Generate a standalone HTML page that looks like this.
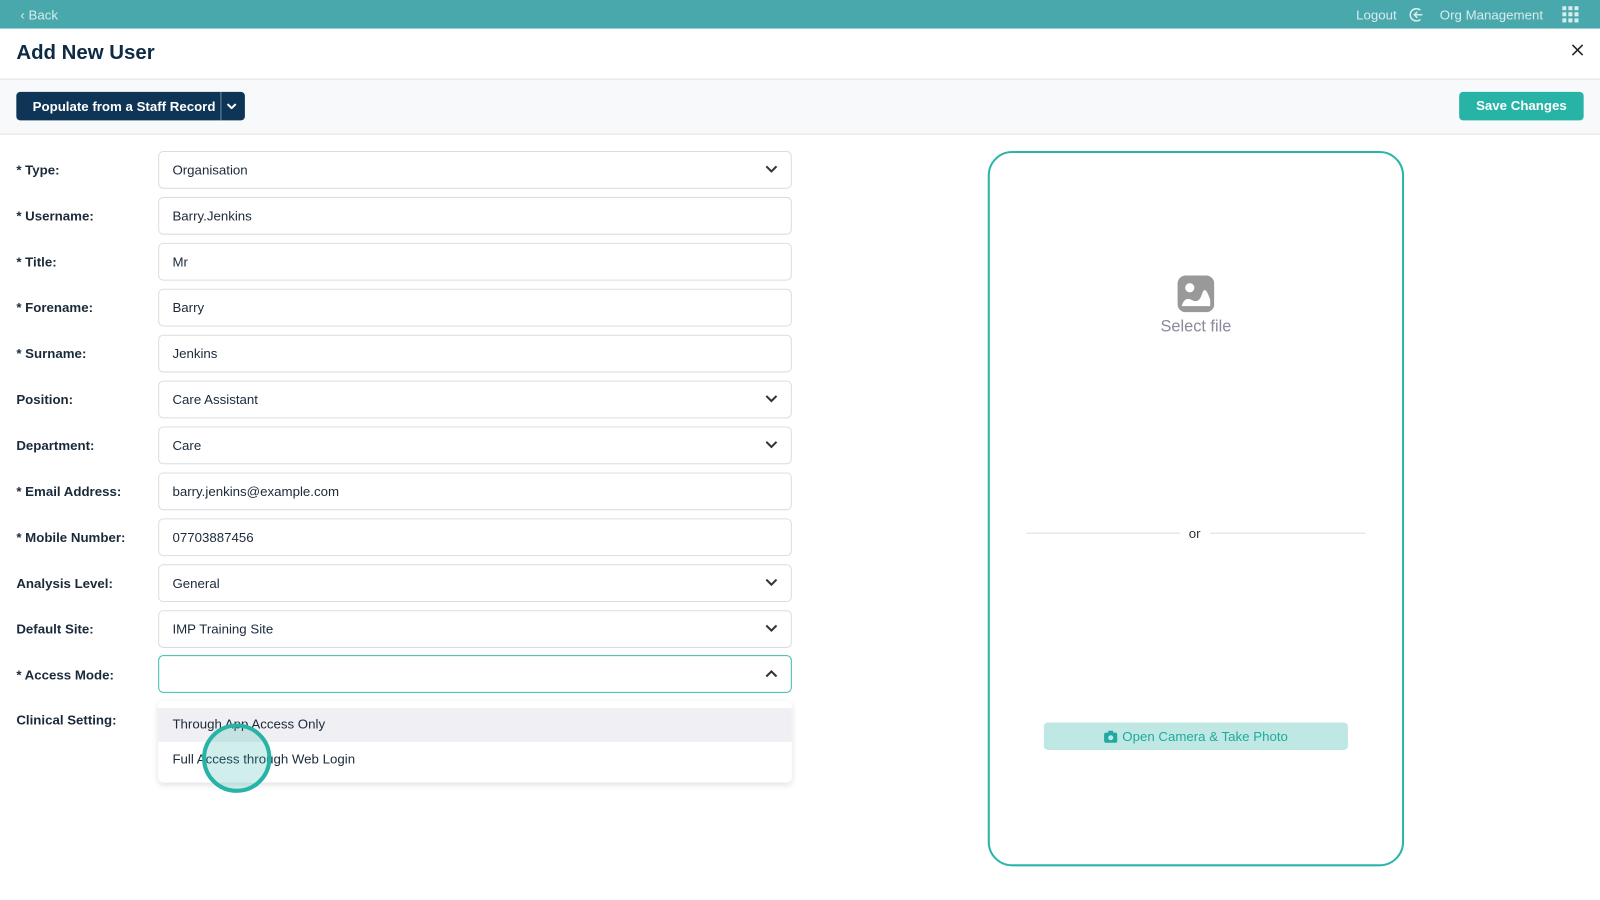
<!DOCTYPE html>
<html><head><style>
*{box-sizing:border-box;margin:0;padding:0}
body{width:1600px;height:900px;background:#fff;font-family:"Liberation Sans",sans-serif;color:#1b2a3a;position:relative;overflow:hidden}
#w{position:absolute;left:0;top:0;width:1568px;height:882px;transform:scale(1.0204);transform-origin:0 0}
.top{position:absolute;left:0;top:0;width:1568px;height:28px;background:#48a8ac;color:#d8eced;font-size:13px}
.top span{position:absolute;top:7px}
.title{position:absolute;left:16px;top:41px;font-size:20px;font-weight:bold;color:#0f2a44}
.hdr{position:absolute;left:0;top:77px;width:1568px;height:55px;background:#f8f9fa;border-top:1px solid #dde0e6;border-bottom:1px solid #e3e5ea}
.pop{position:absolute;left:16px;top:90px;height:28px;width:224px;background:#0e3556;border-radius:4px;color:#fff;font-size:13px;font-weight:bold}
.pop .t{position:absolute;left:16px;top:7px}
.pop .d{position:absolute;left:200px;top:0;width:1px;height:28px;background:#6d8aa3}
.save{position:absolute;left:1430px;top:90px;width:122px;height:28px;background:#27b3a6;border-radius:4px;color:#fff;font-size:13px;font-weight:bold;text-align:center;line-height:28px}
.lbl{position:absolute;left:16px;font-size:13px;font-weight:bold;color:#1b2a3a}
.inp{position:absolute;left:155px;width:621px;height:37px;border:1px solid #d9dde3;border-radius:5px;font-size:13px;padding:10px 13px;color:#1b2a3a}
.inp svg{position:absolute;right:13px;top:13px}
.panel{position:absolute;left:968px;top:148px;width:408px;height:701px;border:2px solid #2bb5aa;border-radius:24px}
</style></head><body><div id="w">
<div class="top"><span style="left:20px">‹ Back</span><span style="left:1329px">Logout</span>
<svg style="position:absolute;left:1381px;top:7px" width="15" height="15" viewBox="0 0 15 15" fill="none" stroke="#d8eced" stroke-width="1.5"><path d="M11 3A6 6 0 1 0 11 12"/><path d="M13 7.5H5M8 4.5 5 7.5 8 10.5"/></svg>
<span style="left:1411px">Org Management</span>
<svg style="position:absolute;left:1531px;top:6px" width="16" height="16" fill="#d8eced"><rect x="0" y="0" width="4" height="4"/><rect x="6" y="0" width="4" height="4"/><rect x="12" y="0" width="4" height="4"/><rect x="0" y="6" width="4" height="4"/><rect x="6" y="6" width="4" height="4"/><rect x="12" y="6" width="4" height="4"/><rect x="0" y="12" width="4" height="4"/><rect x="6" y="12" width="4" height="4"/><rect x="12" y="12" width="4" height="4"/></svg></div>
<div class="title">Add New User</div>
<svg style="position:absolute;left:1540px;top:43px" width="12" height="12" stroke="#222" stroke-width="1.5"><path d="M1 1L11 11M11 1L1 11"/></svg>
<div class="hdr"></div>
<div class="pop"><span class="t">Populate from a Staff Record</span><span class="d"></span>
<svg style="position:absolute;left:206px;top:11px" width="10" height="6" fill="none" stroke="#fff" stroke-width="2"><path d="M1 1l4 4 4-4"/></svg></div>
<div class="save">Save Changes</div>

<div class="lbl" style="top:159px">* Type:</div><div class="inp" style="top:148px">Organisation<svg width="12" height="8" fill="none" stroke="#333" stroke-width="2"><path d="M1 1l5 5 5-5"/></svg></div>
<div class="lbl" style="top:204px">* Username:</div><div class="inp" style="top:193px">Barry.Jenkins</div>
<div class="lbl" style="top:249px">* Title:</div><div class="inp" style="top:238px">Mr</div>
<div class="lbl" style="top:294px">* Forename:</div><div class="inp" style="top:283px">Barry</div>
<div class="lbl" style="top:339px">* Surname:</div><div class="inp" style="top:328px">Jenkins</div>
<div class="lbl" style="top:384px">Position:</div><div class="inp" style="top:373px">Care Assistant<svg width="12" height="8" fill="none" stroke="#333" stroke-width="2"><path d="M1 1l5 5 5-5"/></svg></div>
<div class="lbl" style="top:429px">Department:</div><div class="inp" style="top:418px">Care<svg width="12" height="8" fill="none" stroke="#333" stroke-width="2"><path d="M1 1l5 5 5-5"/></svg></div>
<div class="lbl" style="top:474px">* Email Address:</div><div class="inp" style="top:463px">barry.jenkins@example.com</div>
<div class="lbl" style="top:519px">* Mobile Number:</div><div class="inp" style="top:508px">07703887456</div>
<div class="lbl" style="top:564px">Analysis Level:</div><div class="inp" style="top:553px">General<svg width="12" height="8" fill="none" stroke="#333" stroke-width="2"><path d="M1 1l5 5 5-5"/></svg></div>
<div class="lbl" style="top:609px">Default Site:</div><div class="inp" style="top:598px">IMP Training Site<svg width="12" height="8" fill="none" stroke="#333" stroke-width="2"><path d="M1 1l5 5 5-5"/></svg></div>
<div class="lbl" style="top:654px">* Access Mode:</div><div class="inp" style="top:642px;border-color:#3bbcb1"><svg width="12" height="8" fill="none" stroke="#333" stroke-width="2"><path d="M1 7l5-5 5 5"/></svg></div>
<div class="lbl" style="top:698px">Clinical Setting:</div>
<div style="position:absolute;left:155px;top:687px;width:621px;height:80px;background:#fff;border-radius:5px;box-shadow:0 2px 6px rgba(0,0,0,.12);font-size:13px">
<div style="position:absolute;left:0;top:7px;width:621px;height:33px;background:#f0f0f4"></div>
<div style="position:absolute;left:14px;top:15px">Through App Access Only</div>
<div style="position:absolute;left:14px;top:49px">Full Access through Web Login</div></div>
<div style="position:absolute;left:198px;top:709px;width:68px;height:68px;border-radius:50%;border:4px solid #27b3a6;background:rgba(39,179,166,.22)"></div>

<div class="panel"></div>
<svg style="position:absolute;left:1154px;top:270px" width="36" height="36" viewBox="0 0 36 36"><rect width="36" height="36" rx="8" fill="#999"/><circle cx="12" cy="12" r="4.5" fill="#fff"/><path d="M4 30q3-10 10-6t10-6 8 6v6H4z" fill="#fff"/></svg>
<div style="position:absolute;left:1000px;top:312px;width:344px;text-align:center;font-size:16px;color:#8a8a9a">Select file</div>
<div style="position:absolute;left:1006px;top:522px;width:150px;height:1px;background:#ddd"></div>
<div style="position:absolute;left:1186px;top:522px;width:152px;height:1px;background:#ddd"></div>
<div style="position:absolute;left:1165px;top:515px;font-size:13px;color:#333">or</div>
<div style="position:absolute;left:1023px;top:708px;width:298px;height:27px;background:#bfe8e5;border-radius:4px;color:#20aa9d;font-size:13px;text-align:center;line-height:27px">
<svg style="vertical-align:-2px;margin-right:5px" width="13" height="12" viewBox="0 0 13 12"><rect x="0" y="2" width="13" height="10" rx="2" fill="#20aa9d"/><rect x="4" y="0" width="5" height="3" rx="1" fill="#20aa9d"/><circle cx="6.5" cy="7" r="2.5" fill="#bfe8e5"/></svg>Open Camera &amp; Take Photo</div>
</div></body></html>
